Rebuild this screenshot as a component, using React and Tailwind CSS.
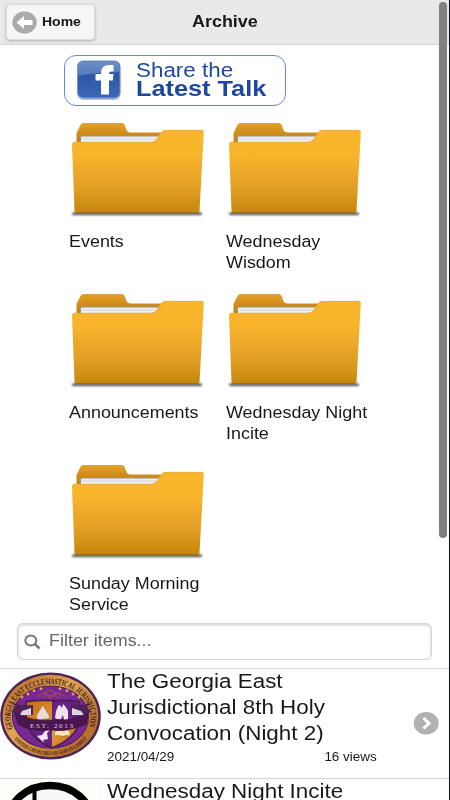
import { useId } from 'react';
import clsx from 'clsx';

const folders = ['Events', 'Wednesday\nWisdom', 'Announcements', 'Wednesday Night\nIncite', 'Sunday Morning\nService'];

// Labels are set a little wider than the font's natural width
function Wide({ className, scale = 'scale-x-[1.12]', children }) {
    return (
        <span className={clsx('block w-max origin-left whitespace-pre', scale, className)}>{children}</span>
    );
}

function FolderIcon() {
    const id = useId();

    return (
        <svg width="138" height="99" viewBox="0 0 138 99" className="block">
            <defs>
                <linearGradient id={`${id}front`} x1="0" y1="0" x2="0" y2="1">
                    <stop offset="0" stopColor="#f9b62b" />
                    <stop offset="0.3" stopColor="#f8b42b" />
                    <stop offset="0.68" stopColor="#e3a027" />
                    <stop offset="1" stopColor="#c4860b" />
                </linearGradient>
                <linearGradient id={`${id}back`} x1="0" y1="0" x2="0" y2="1">
                    <stop offset="0" stopColor="#e6a12a" />
                    <stop offset="0.4" stopColor="#cf8c17" />
                    <stop offset="1" stopColor="#b87808" />
                </linearGradient>
                <filter id={`${id}blur`} x="-10%" y="-100%" width="120%" height="300%">
                    <feGaussianBlur stdDeviation="0.8" />
                </filter>
            </defs>
            <rect x="3" y="93.500" width="130" height="2.600" rx="1.300" fill="#444" filter={`url(#${id}blur)`} />
            <path d="M7.500 26V14L11 7Q12 4 15 4H52Q55 4 56 7L57.500 11Q58.500 13.500 62 13.500H108V30H7.500Z" fill={`url(#${id}back)`} />
            <path d="M8 14 11.500 7Q12.500 4.500 15 4.500H52Q55 4.500 56 7" fill="none" stroke="#d6a24a" strokeWidth="0.8" />
            <path d="M11 18Q11 16.500 13 16.500H96V26H11Z" fill="#96928a" />
            <path d="M12 18.500Q12 17.500 13 17.500H91L88 23H12Z" fill="#eeeeed" />
            <path d="M13 20H90" stroke="#cfcfcf" strokeWidth="0.8" />
            <path d="M5 23H82Q85.500 23 87.500 20L91.500 14Q93.500 11 97 11H133Q135 11 134.800 13L130.500 92Q130.500 94 128.500 94H7Q5.500 94 5.500 92L3 26Q3 23 5 23Z" fill={`url(#${id}front)`} />
            <path d="M4.500 23.300H82Q86 23.300 88 20.300L92 14.300Q94 11.400 97 11.400H133.500" fill="none" stroke="#e4ad45" strokeWidth="0.9" />
            <path d="M6.500 93.500H129" stroke="#9c6a10" strokeWidth="1" />
        </svg>
    );
}

function BackIcon() {
    return (
        <svg width="25" height="23" viewBox="0 0 25 23" className="block">
            <ellipse cx="12.500" cy="11.500" rx="12.200" ry="11" fill="#aaa" />
            <path d="M4.500 11.500 12 5V9H20.500V14H12V18Z" fill="#fff" />
        </svg>
    );
}

function FacebookIcon() {
    return (
        <svg width="46" height="42" viewBox="0 0 46 42" className="block">
            <defs>
                <linearGradient id="fb" x1="0" y1="0" x2="0" y2="1">
                    <stop offset="0" stopColor="#365fa9" />
                    <stop offset="0.4" stopColor="#2e56a4" />
                    <stop offset="1" stopColor="#3c68bb" />
                </linearGradient>
                <linearGradient id="fbShine" x1="0" y1="0" x2="0" y2="1">
                    <stop offset="0" stopColor="#6c8fc8" />
                    <stop offset="1" stopColor="#5578b7" />
                </linearGradient>
            </defs>
            <rect x="1.500" y="2" width="43" height="38" rx="6" fill="#b5bfd3" />
            <rect x="1" y="0.500" width="43.500" height="38" rx="6" fill="#7694c9" />
            <rect x="2" y="1.500" width="41.500" height="36" rx="5" fill="url(#fb)" />
            <path d="M2 16V7Q2 1.500 7 1.500H38.500Q43.500 1.500 43.500 7V12Q22 12 2 16Z" fill="url(#fbShine)" />
            <path d="M25 34.500V20.500H19.500V14H25V12.500Q25 5 33 5H37.500V11.500H35Q33 11.500 33 13.500V14H37.500L36.800 20.500H33V34.500Z" fill="#fff" />
        </svg>
    );
}

function Seal() {
    return (
        <svg width="102" height="92" viewBox="0 0 102 92" className="block">
            <defs>
                <path id="sealTop" d="M13 59.500A40 33 0 1 1 88 59.500" />
                <path id="sealBottom" d="M13 68.500A44.500 38 0 0 0 88 68.500" />
                <linearGradient id="ring" x1="0" y1="0" x2="1" y2="1">
                    <stop offset="0" stopColor="#a95e27" />
                    <stop offset="0.2" stopColor="#c98238" />
                    <stop offset="0.4" stopColor="#e3a552" />
                    <stop offset="0.75" stopColor="#bd742f" />
                    <stop offset="1" stopColor="#a7602d" />
                </linearGradient>
                <linearGradient id="gold" x1="0" y1="0" x2="1" y2="1">
                    <stop offset="0" stopColor="#c36a12" />
                    <stop offset="0.6" stopColor="#f1a13b" />
                    <stop offset="1" stopColor="#a65c13" />
                </linearGradient>
            </defs>
            <ellipse cx="50.500" cy="47" rx="50.300" ry="43.500" fill="#4c2456" />
            <ellipse cx="50.500" cy="47" rx="47.800" ry="41.200" fill="url(#ring)" />
            <ellipse cx="50.500" cy="48" rx="38" ry="31" fill="#7a2796" stroke="#57205f" strokeWidth="1.200" />
            <text fontSize="8.500" className="font-['Liberation_Serif',serif] font-bold" fill="#3a1d20">
                <textPath href="#sealTop" textLength="136" lengthAdjust="spacingAndGlyphs">GEORGIA EAST ECCLESIASTICAL JURISDICTION</textPath>
            </text>
            <text fontSize="5.500" className="font-['Liberation_Serif',serif] font-bold" fill="#3a1d20">
                <textPath href="#sealBottom" startOffset="2" textLength="82" lengthAdjust="spacingAndGlyphs">UNITED CHURCHES OF GOD IN CHRIST</textPath>
            </text>
            <g fill="#e7b65a">
                {[[22, 28], [28, 25], [34, 21.500], [41, 19.500], [60, 19.500], [67, 21.500], [73, 25], [79, 28]].map(([x, y]) => (
                    <path key={x} transform={`translate(${x} ${y})`} d="M0-2 .6-.6 2-.6 .9.3 1.300 1.800 0 1-1.300 1.800-.9.3-2-.6-.6-.6Z" />
                ))}
            </g>
            <path d="M37 28Q44 21 50.500 27Q57 21 65 28M41 30Q47 23 50.500 30Q54 23 60 30M45 24Q50.500 18 56 24" fill="none" stroke="#b3563f" strokeWidth="0.900" />
            <path d="M26 32.500Q39 30.500 52 31.500Q66 30.500 79 32.500V52Q76 70 52 79Q30 70 26 52Z" fill="#672084" stroke="#43204a" strokeWidth="1.500" />
            <path d="M27 33.500Q39 31.500 52 32.500V55H27ZM52 57H77Q72 70 52 78Z" fill="url(#gold)" />
            <path d="M36 47 41 39Q42 35 44 38L49 46Q51 50 46 50L38 51Z" fill="#e8dbd2" stroke="#775140" strokeWidth="0.500" />
            <path d="M55 49 56 42 57 40 58 37 60 36 62 39 63 35 65 37 67 40 68 42 68 51H64L63 46 61 50H57Z" fill="#eee3ef" />
            <path d="M37 67 42 66 45 62Q46 60 50 61L47 64 48 70 43 71 44 74 40 70Z" fill="#f5e7f4" />
            <path d="M55 62Q59 60 63 62Q67 60 70 62V67Q66 66 63 67.500Q59 66 54 67Z" fill="#f5e1bd" stroke="#855323" strokeWidth="0.500" />
            <path d="M33 36Q22 37 12 34L16 38 11 43 19 45 33 46ZM71 36Q82 37 91 34L87 38 92 43 84 45 71 46Z" fill="#502059" />
            <path d="M22 42 31 39V46L20 46ZM81 42 72 39V46L84 46Z" fill="#ddd6df" />
            <path d="M15 44Q33 53 51 51Q71 53 88 44L86 55Q69 63 51 61Q31 63 18 55Z" fill="#4b164f" stroke="#321638" strokeWidth="0.800" />
            <text x="30" y="59" fontSize="7" textLength="43" className="font-['Liberation_Serif',serif]" fill="#e5cce5">EST. 2013</text>
        </svg>
    );
}

function RingLogo() {
    return (
        <svg width="102" height="22" viewBox="0 0 102 22" className="block">
            <rect width="102" height="22" fill="#fdfdf9" />
            <ellipse cx="50" cy="42" rx="41.500" ry="35.500" fill="#f8f8f8" stroke="#000" strokeWidth="7.500" />
            <path d="M30.500 13.500 36.500 9V22H32.500V13.500Z" fill="#000" />
        </svg>
    );
}

function Header() {
    return (
        <header className="flex h-[45px] items-center border-b border-[#d4d4d4] bg-[#e9e9e9] pl-1.5">
            <button className="flex h-[36px] w-[89px] items-center gap-[5px] rounded-[4px] border border-[#dcdcdc] bg-[#f6f6f6] pl-[5px] shadow-[0_1px_3px_rgba(0,0,0,0.25)]">
                <BackIcon />
                <Wide className="text-[12.5px] font-bold">Home</Wide>
            </button>
            <h1 className="ml-[97px] text-base font-bold">
                <Wide>Archive</Wide>
            </h1>
        </header>
    );
}

function Talk({ title, image, date, views }) {
    return (
        <li className="flex h-[110px] shrink-0 border-t border-[#d8d8d8]">
            <div className="w-[107px] shrink-0">{image}</div>
            <div className="-mt-px w-[270px] shrink-0">
                <h2 className="text-[20px] leading-[26px]">
                    <Wide>{title}</Wide>
                </h2>
                {date && (
                    <div className="mt-px flex justify-between text-[12px] leading-5">
                        <Wide>{date}</Wide>
                        <Wide className="origin-right">{views}</Wide>
                    </div>
                )}
            </div>
            {date && (
                <svg width="26" height="24" viewBox="0 0 26 24" className="mt-[42px] ml-9 shrink-0">
                    <ellipse cx="13.200" cy="12.300" rx="12.500" ry="11.300" fill="#b1b1b1" />
                    <path d="M10.500 7 16 12.300 10.500 17.500" fill="none" stroke="#fff" strokeWidth="3" />
                </svg>
            )}
        </li>
    );
}

export default function App() {
    return (
        <div className="relative h-[800px] w-[450px] overflow-hidden border-r border-[#07131f] bg-white font-['Liberation_Sans',Arial,sans-serif] text-[#181818]">
            <Header />

            <main className="pt-[10px]">
                <a className="ml-16 flex h-[51px] w-[222px] items-center rounded-[12px] border border-[#6688e5] pl-[11px] text-[#1f479f]">
                    <FacebookIcon />
                    <div className="ml-3.5 pb-[3px]">
                        <Wide className="text-[20px] leading-[19px]">Share the</Wide>
                        <Wide scale="scale-x-[1.15]" className="text-[22px] leading-[18px] font-bold">Latest Talk</Wide>
                    </div>
                </a>

                <div className="ml-[69px] grid grid-cols-[157px_157px] pt-[13px]">
                    {folders.map((name) => (
                        <div key={name} className="h-[171px]">
                            <FolderIcon />
                            <Wide className="mt-[13px] text-base leading-[21px]">{name}</Wide>
                        </div>
                    ))}
                </div>

                <div className="mx-[17px] mt-[-9px] flex h-[37px] w-[415px] items-center rounded-[6px] border border-[#d4d4d4] pl-1.5 shadow-[inset_0_1px_3px_rgba(0,0,0,0.2)]">
                    <svg width="17" height="16" viewBox="0 0 17 16" fill="none" stroke="#777" strokeWidth="2">
                        <ellipse cx="6.800" cy="6.500" rx="5.500" ry="5" />
                        <path d="M10.800 10 15.500 14.500" strokeWidth="2.500" />
                    </svg>
                    <Wide className="ml-2 pb-0.5 text-base text-[#666]">Filter items...</Wide>
                </div>

                <ul className="mt-2">
                    <Talk
                        title={'The Georgia East\nJurisdictional 8th Holy\nConvocation (Night 2)'}
                        image={<Seal />}
                        date="2021/04/29"
                        views="16 views"
                    />
                    <Talk title="Wednesday Night Incite" image={<RingLogo />} />
                </ul>
            </main>

            {/* overlay scrollbar */}
            <div className="absolute top-0.5 right-[2px] h-[536px] w-2 rounded-full bg-[#808080]" />
        </div>
    );
}
